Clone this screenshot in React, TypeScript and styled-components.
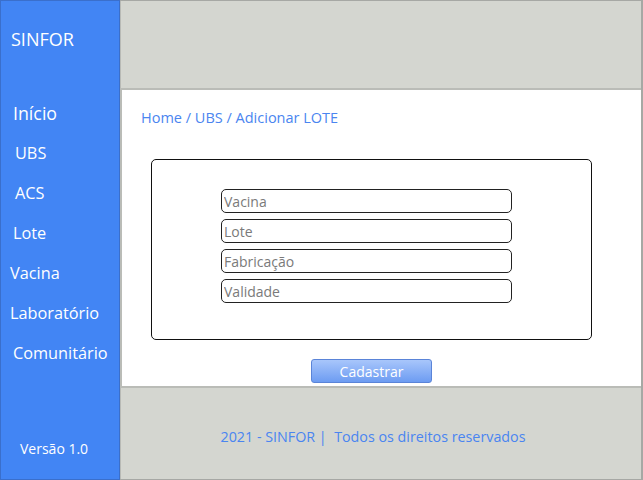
import React from "react";
import styled, { createGlobalStyle } from "styled-components";

const Global = createGlobalStyle`
  html, body { margin: 0; padding: 0; }
  body { font-family: "Open Sans", "DejaVu Sans", sans-serif; background: #fff; }
  * { box-sizing: border-box; }
`;

const Page = styled.div`
  display: grid;
  grid-template-columns: 120px 1fr;
  width: 643px;
  height: 480px;
`;

const Sidebar = styled.aside`
  background: #4285f4;
  border: 1px solid #3a6fcc;
  display: flex;
  flex-direction: column;
  color: #fff;
`;

const Brand = styled.div`
  font-size: 18px;
  padding: 26px 0 0 10px;
  height: 92px;
`;

const Nav = styled.nav`
  display: flex;
  flex-direction: column;
`;

const NavItem = styled.a<{ $indent: number; $large?: boolean }>`
  color: #fff;
  font-size: ${(p) => (p.$large ? "17.8px" : "16.3px")};
  height: 40px;
  line-height: 40px;
  padding-left: ${(p) => p.$indent - 1}px;
  text-decoration: none;
`;

const Version = styled.div`
  margin-top: auto;
  font-size: 14px;
  padding: 0 0 21px 19px;
`;

const Main = styled.main`
  display: flex;
  flex-direction: column;
  border-top: 1px solid #a6a8a4;
  border-right: 2px solid #a6a8a4;
  border-bottom: 1px solid #a6a8a4;
  background: #d4d6d0;
`;

const Header = styled.div`
  height: 87px;
  border-left: 1px solid #b8bab5;
`;

const Content = styled.section`
  background: #fff;
  height: 300px;
  border-top: 2px solid #babcb7;
  border-left: 2px solid #babcb7;
  border-bottom: 2px solid #babcb7;
  padding: 18px 0 0 19px;
  display: flex;
  flex-direction: column;
`;

const Crumb = styled.div`
  color: #4a85f0;
  font-size: 14.5px;
  line-height: 20px;
`;

const FormBox = styled.div`
  flex-shrink: 0;
  margin: 31px 0 0 10px;
  width: 441px;
  height: 181px;
  border: 1px solid #111;
  border-radius: 5px;
  display: flex;
  flex-direction: column;
  gap: 6px;
  padding: 29px 0 0 69px;
`;

const Field = styled.input`
  width: 291px;
  height: 24px;
  border: 1.5px solid #222;
  border-radius: 5px;
  padding: 0 2px;
  font-family: "Open Sans", "DejaVu Sans", sans-serif;
  font-size: 14px;
  color: #333;
  background: #fff;
  outline: none;
  &::placeholder { color: #7a7a7a; }
`;

const ButtonRow = styled.div`
  display: flex;
  padding: 19px 0 0 170px;
`;

const Button = styled.button`
  width: 121px;
  height: 24px;
  border: 1px solid #5a84d8;
  border-radius: 3px;
  background: linear-gradient(#a8c6fb, #6d9cf2);
  color: #fff;
  font-family: "Open Sans", "DejaVu Sans", sans-serif;
  font-size: 14px;
  padding: 0;
`;

const Footer = styled.footer`
  flex: 1;
  display: flex;
  align-items: center;
  justify-content: center;
  padding-right: 16px;
  padding-top: 6px;
  color: #4a85f0;
  font-size: 14.3px;
  white-space: pre;
  border-left: 1px solid #b8bab5;
`;

const navItems: [string, number][] = [
  ["Início", 13],
  ["UBS", 15],
  ["ACS", 15],
  ["Lote", 13],
  ["Vacina", 10],
  ["Laboratório", 10],
  ["Comunitário", 13],
];

export default function App() {
  return (
    <>
      <Global />
      <Page>
        <Sidebar>
          <Brand>SINFOR</Brand>
          <Nav>
            {navItems.map(([label, indent], i) => (
              <NavItem key={label} $indent={indent} $large={i === 0}>
                {label}
              </NavItem>
            ))}
          </Nav>
          <Version>Versão 1.0</Version>
        </Sidebar>
        <Main>
          <Header />
          <Content>
            <Crumb>Home / UBS / Adicionar LOTE</Crumb>
            <FormBox>
              <Field placeholder="Vacina" />
              <Field placeholder="Lote" />
              <Field placeholder="Fabricação" />
              <Field placeholder="Validade" />
            </FormBox>
            <ButtonRow>
              <Button>Cadastrar</Button>
            </ButtonRow>
          </Content>
          <Footer>{"2021 - SINFOR |  Todos os direitos reservados"}</Footer>
        </Main>
      </Page>
    </>
  );
}
